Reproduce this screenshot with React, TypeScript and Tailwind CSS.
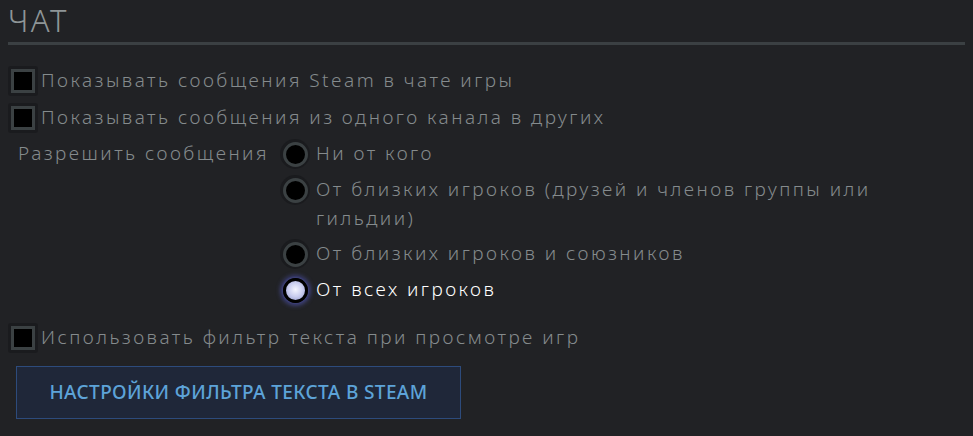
import React from "react";

const font = { fontFamily: '"Noto Sans", "DejaVu Sans", sans-serif' };

const Checkbox = ({ label }: { label: string }) => (
  <div className="flex items-center h-[37px]">
    <div className="w-[30px] h-[30px] rounded-[3px] bg-[#1a1b1e] flex items-center justify-center shrink-0">
      <div className="w-[24px] h-[24px] border-[3px] border-[#3b4143] bg-black" />
    </div>
    <span className="ml-[3px] text-[19px] font-light tracking-[0.13em] text-[#858b8d]">{label}</span>
  </div>
);

const Radio = ({ label, checked }: { label: string; checked?: boolean }) => (
  <div className="flex items-start py-[3px]">
    <div className="w-[30px] h-[30px] rounded-full bg-[#1a1b1e] flex items-center justify-center shrink-0">
      {checked ? (
        <div className="w-[25px] h-[25px] rounded-full border-[3px] border-black bg-[radial-gradient(circle_at_50%_45%,#f4f5ff_0%,#c9cdef_50%,#8f95c9_100%)] shadow-[0_0_5px_2px_#4b4f9c]" />
      ) : (
        <div className="w-[25px] h-[25px] rounded-full border-[3px] border-[#3b4143] bg-black" />
      )}
    </div>
    <span
      className={`ml-[6px] text-[19px] font-light leading-[29px] tracking-[0.13em] ${
        checked ? "text-white" : "text-[#858b8d]"
      }`}
    >
      {label}
    </span>
  </div>
);

const App = () => {
  return (
    <div className="w-[973px] h-[436px] bg-[#212225] overflow-hidden" style={font}>
      <div className="pl-[8px] pr-[8px]">
        <div className="border-b-[3px] border-[#3b4043] h-[45px]">
          <h1 className="text-[31px] font-light tracking-[0.08em] text-[#8e9597] leading-[40px]">ЧАТ</h1>
        </div>
        <div className="mt-[17px]">
          <Checkbox label="Показывать сообщения Steam в чате игры" />
          <Checkbox label="Показывать сообщения из одного канала в других" />
        </div>
        <div className="flex">
          <div className="pl-[10px] w-[272px] text-[19px] font-light tracking-[0.13em] text-[#858b8d] leading-[29px] pt-[3px]">
            Разрешить сообщения
          </div>
          <div className="flex flex-col w-[640px]">
            <Radio label="Ни от кого" />
            <Radio label="От близких игроков (друзей и членов группы или гильдии)" />
            <Radio label="От близких игроков и союзников" />
            <Radio label="От всех игроков" checked />
          </div>
        </div>
        <div className="mt-[11px]">
          <Checkbox label="Использовать фильтр текста при просмотре игр" />
        </div>
        <button className="mt-[10px] ml-[8px] w-[445px] h-[53px] border border-[#2d4b7c] bg-[#1f2739] text-[#5da3d8] text-[19px] font-medium tracking-[0.02em]">
          НАСТРОЙКИ ФИЛЬТРА ТЕКСТА В STEAM
        </button>
      </div>
    </div>
  );
};

export default App;
